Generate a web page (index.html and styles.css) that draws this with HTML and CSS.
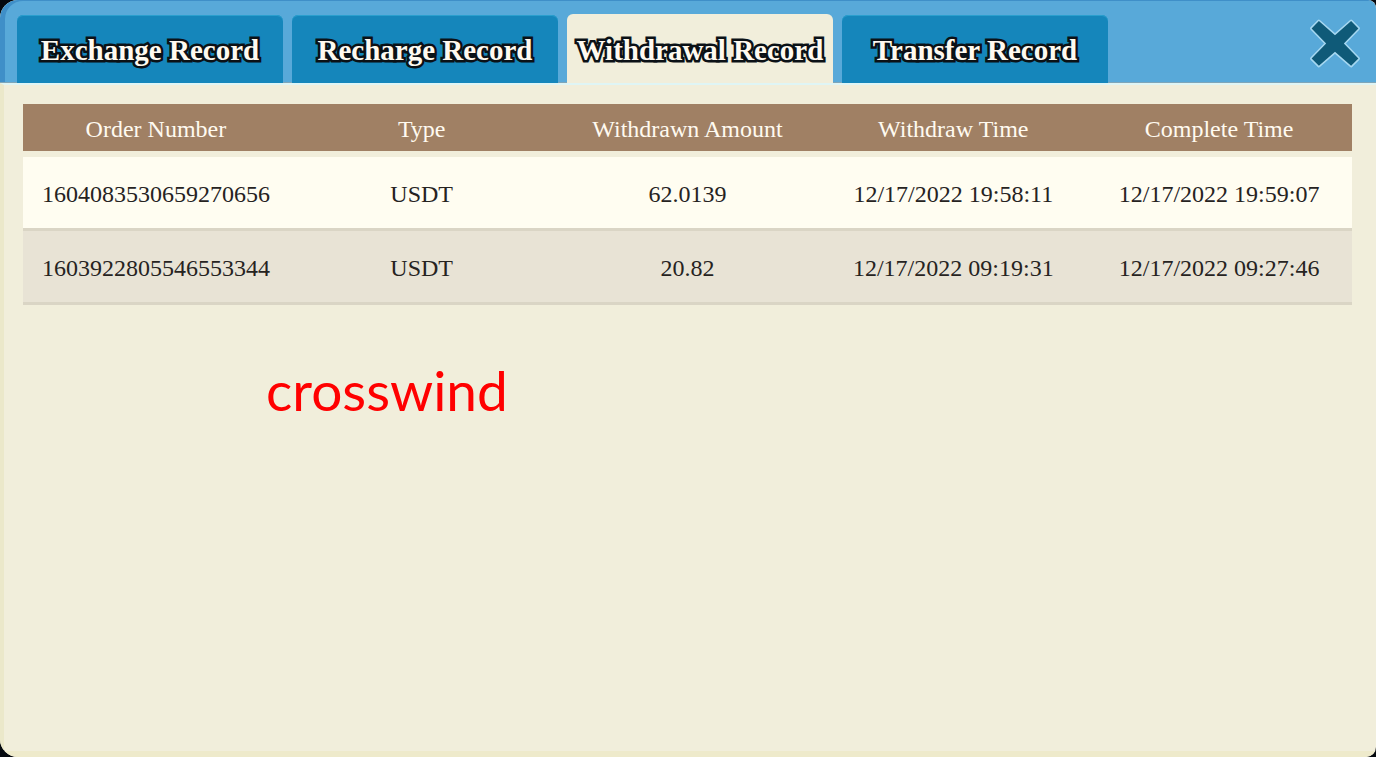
FILE: index.html
```html
<!DOCTYPE html>
<html lang="en">
<head>
    <meta charset="UTF-8">
    <title>Withdrawal Record</title>
    <link rel="stylesheet" href="styles.css">
</head>
<body>
    <div class="panel">
        <div class="header">
            <div class="tabs">
                <button class="tab">Exchange Record</button>
                <button class="tab">Recharge Record</button>
                <button class="tab active">Withdrawal Record</button>
                <button class="tab">Transfer Record</button>
            </div>
            <button class="close-btn" aria-label="Close">
                <svg viewBox="0 0 50 50" width="52" height="52">
                    <path d="M9.500 3L25 16.500L40.500 3L47.500 10L33.500 24.500L47.500 39L40.500 46L25 32.500L9.500 46L2.500 39L16.500 24.500L2.500 10Z"/>
                </svg>
            </button>
        </div>

        <div class="content">
            <table class="records">
                <thead>
                    <tr>
                        <th>Order Number</th>
                        <th>Type</th>
                        <th>Withdrawn Amount</th>
                        <th>Withdraw Time</th>
                        <th>Complete Time</th>
                    </tr>
                </thead>
                <tbody>
                    <tr>
                        <td>1604083530659270656</td>
                        <td>USDT</td>
                        <td>62.0139</td>
                        <td>12/17/2022 19:58:11</td>
                        <td>12/17/2022 19:59:07</td>
                    </tr>
                    <tr>
                        <td>1603922805546553344</td>
                        <td>USDT</td>
                        <td>20.82</td>
                        <td>12/17/2022 09:19:31</td>
                        <td>12/17/2022 09:27:46</td>
                    </tr>
                </tbody>
            </table>
            <p class="note">crosswind</p>
        </div>
    </div>
</body>
</html>
```
FILE: styles.css
```css
:root {
    --bar-color: #58a9d9;
    --bar-edge: #3f8fc8;
    --tab-color: #1586bb;
    --panel-color: #f1eedb;
    --head-color: #a08064;
    --row-color: #fffdf1;
    --row-alt-color: #e8e3d5;
}

* {
    box-sizing: border-box;
    margin: 0;
    padding: 0;
}

body {
    background: #05090f;
    font-family: "Liberation Serif", "Times New Roman", serif;
}

.panel {
    min-height: 100vh;
    display: flex;
    flex-direction: column;
    background: var(--panel-color);
    border-radius: 18px 8px 10px 18px;
    overflow: hidden;
}

.header {
    display: flex;
    align-items: flex-end;
    justify-content: space-between;
    height: 83px;
    padding: 0 15px 0 17px;
    background: var(--bar-color);
    border-bottom: 1px solid #7fa5b8;
    border-radius: 18px 8px 0 0;
    box-shadow: inset 5px 1px 0 var(--bar-edge);
}

.tabs {
    flex: 1;
    display: flex;
    align-items: flex-end;
    gap: 9px;
    margin-bottom: -1px;
}

.tab {
    flex: 0 1 266px;
    height: 68px;
    padding-top: 3px;
    border: none;
    border-radius: 6px 6px 0 0;
    background: var(--tab-color);
    box-shadow: inset 0 1px 0 #2a9fce;
    color: #fffaf0;
    font-family: inherit;
    font-size: 29px;
    font-weight: bold;
    white-space: nowrap;
    cursor: pointer;
    -webkit-text-stroke: 5px #0b1116;
    paint-order: stroke fill;
}

.tab.active {
    height: 69px;
    background: var(--panel-color);
    box-shadow: none;
}

.close-btn {
    align-self: center;
    display: flex;
    padding-top: 5px;
    border: none;
    background: none;
    cursor: pointer;
}

.close-btn path {
    fill: #0f5a78;
    stroke: #a5d7f0;
    stroke-width: 3;
    stroke-linejoin: round;
    paint-order: stroke fill;
}

.content {
    flex: 1;
    padding: 19px 24px 24px 19px;
    border-left: 4px solid #ebe8ca;
    border-top: 2px solid #dff5f5;
    border-bottom: 6px solid #eeeacb;
}

.records {
    width: 100%;
    table-layout: fixed;
    border-collapse: separate;
    border-spacing: 0;
    text-align: center;
}

.records th {
    height: 53px;
    padding-top: 3px;
    border-bottom: 6px solid transparent;
    background: var(--head-color);
    background-clip: padding-box;
    color: #fffaf0;
    font-size: 24px;
    font-weight: normal;
}

.records td {
    height: 74px;
    padding-top: 4px;
    border-bottom: 3px solid #dad5c5;
    background: var(--row-color);
    color: #26231f;
    font-size: 24px;
}

.records tr:nth-child(even) td {
    background: var(--row-alt-color);
}

.note {
    padding: 53px 0 0 243px;
    color: #ff0000;
    font-family: Lato, Calibri, sans-serif;
    font-size: 55px;
    line-height: 64px;
}
```
